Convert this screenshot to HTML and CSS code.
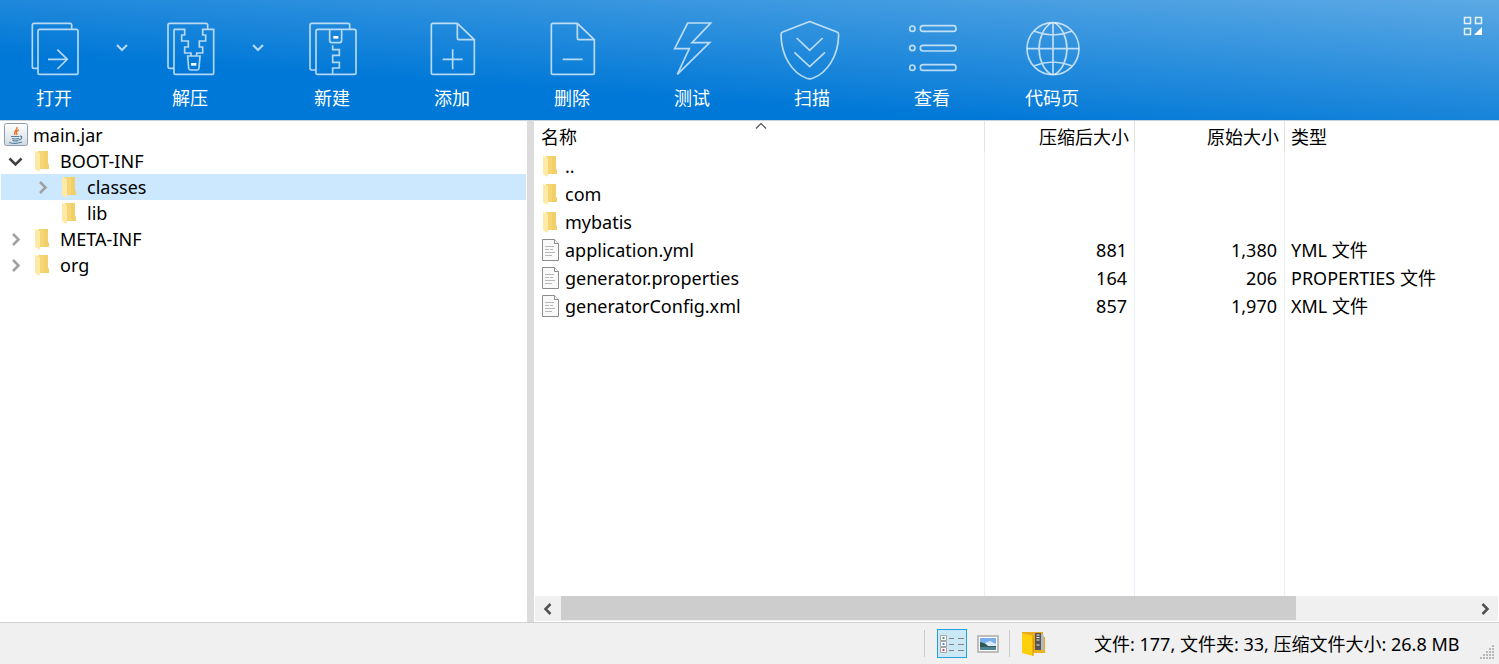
FILE: index.html
```html
<!DOCTYPE html>
<html lang="zh-CN">
<head>
<meta charset="utf-8">
<title>main.jar</title>
<link rel="stylesheet" href="styles.css">
</head>
<body>
<svg class="sprite" aria-hidden="true">
  <symbol id="folder" viewBox="0 0 16 22">
    <path d="M4 1h10v13l1 1v4H4z" fill="#f6d673"/>
    <path d="M10 1h4v13l1 1v4h-5z" fill="#f0cb62" opacity=".6"/>
    <path d="M1 1l5 2v17l-1 2-4-3z" fill="#fee9a6"/>
  </symbol>
  <symbol id="file" viewBox="0 0 18 22">
    <path d="M1.500 .5h12l4 4v17h-16z" fill="#fafafa" stroke="#8c8c8c"/>
    <path d="M13.500 .5v4h4" fill="#fff" stroke="#8c8c8c"/>
    <path d="M4 7.500h9M4 10.500h4M9 10.500h3M4 13.500h10M4 16.500h7" stroke="#b9b9b9"/>
  </symbol>
  <symbol id="right" viewBox="0 0 16 16"><path d="M6 3l5.500 5.500L6 14" fill="none" stroke="#a0a0a0" stroke-width="2.500"/></symbol>
</svg>
<div class="app">
  <header class="toolbar">
    <div class="split">
      <button class="tool">
        <svg class="tool-icon" viewBox="72 60 180 180"><path d="M114 205h-12q-5 0-5-5V75q0-5 5-5h108q5 0 5 5v12M119 88h110q5 0 5 5v125q0 5-5 5H119q-5 0-5-5V93q0-5 5-5zM144 178h59M172 149l30 29-30 29"/></svg>
        <span>打开</span>
      </button>
      <button class="drop" aria-label="打开选项"><svg viewBox="0 0 12 8"><path d="M1 1l5 5 5-5"/></svg></button>
    </div>
    <div class="split">
      <button class="tool">
        <svg class="tool-icon" viewBox="480 60 180 180"><path d="M522 205h-12q-6 0-6-5V75q0-5 5-5h109q5 0 5 5v12M522 88h32v17h-9v18h20v18h-11v18h19v9M522 88v130q0 5 5 5h109q5 0 5-5V88h-33v17h9v18h-19v18h10v18h-18v9M563 168h37l-3 37q-1 5-6 5h-19q-5 0-6-5z"/><path class="solid" d="M573 189h16v8h-16z"/></svg>
        <span>解压</span>
      </button>
      <button class="drop" aria-label="解压选项"><svg viewBox="0 0 12 8"><path d="M1 1l5 5 5-5"/></svg></button>
    </div>
    <button class="tool">
      <svg class="tool-icon" viewBox="66 60 180 180"><path d="M108 210H96q-6 0-6-5V75q0-5 5-5h109q5 0 5 5v12M113 88h110q5 0 5 5v125q0 5-5 5H113q-5 0-5-5V93q0-5 5-5zM149 88v32q0 8 6 8h24q6 0 6-8V88M158 136v13h20v17h-20v21h20v17h-20v18"/><path class="solid" d="M160 108h15v8h-15z"/></svg>
      <span>新建</span>
    </button>
    <button class="tool">
      <svg class="tool-icon" viewBox="426 60 180 180"><path d="M532 70h-73q-5 0-5 5v143q0 5 5 5h119q5 0 5-5V119zM532 70v44q0 5 5 5h46M488 178h60M518 148v60"/></svg>
      <span>添加</span>
    </button>
    <button class="tool">
      <svg class="tool-icon" viewBox="786 60 180 180"><path d="M892 70h-73q-5 0-5 5v143q0 5 5 5h119q5 0 5-5V119zM892 70v44q0 5 5 5h46M848 178h60"/></svg>
      <span>删除</span>
    </button>
    <button class="tool">
      <svg class="tool-icon" viewBox="126 60 180 180"><path d="M203 69h69l-56 59h53l-97 95 36-77h-44z"/></svg>
      <span>测试</span>
    </button>
    <button class="tool">
      <svg class="tool-icon" viewBox="486 60 180 180"><path d="M565 66q4-2 8 0l78 30q5 2 5 8c-1 65-35 115-78 131q-9 3-18 0c-43-16-76-66-77-131q0-6 5-8zM530 114l39 37 39-37M523 157l46 43 46-43"/></svg>
      <span>扫描</span>
    </button>
    <button class="tool">
      <svg class="tool-icon" viewBox="66 60 180 180"><circle cx="97" cy="86" r="8"/><circle cx="97" cy="144" r="8"/><circle cx="97" cy="203" r="8"/><rect x="121" y="77" width="107" height="17" rx="8"/><rect x="121" y="136" width="107" height="17" rx="8"/><rect x="121" y="194" width="107" height="17" rx="8"/></svg>
      <span>查看</span>
    </button>
    <button class="tool">
      <svg class="tool-icon" viewBox="426 60 180 180"><circle cx="519" cy="146" r="78"/><path d="M441 146h156M519 68v156M514 68c-49 32-49 124 0 156M524 68c49 32 49 124 0 156M463 94q56 22 112 0M463 197q56-22 112 0"/></svg>
      <span>代码页</span>
    </button>
    <button class="layout" aria-label="布局"><svg viewBox="0 0 20 20"><path d="M1.500 1.500h6v6h-6zM12.500 1.500h6v6h-6zM1.500 12.500h6v6h-6z" fill="none" stroke="#e5f1fb" stroke-width="1.500"/><path d="M19 11v8h-8z" fill="#fff"/></svg></button>
  </header>

  <main class="panes">
    <nav class="tree" aria-label="文件夹">
      <div class="node root">
        <svg class="jar" viewBox="0 0 24 24"><defs><linearGradient id="jg" x2="0" y2="1"><stop stop-color="#fff"/><stop offset="1" stop-color="#d3dce2"/></linearGradient></defs><rect x=".5" y=".5" width="23" height="22" rx="2" fill="url(#jg)" stroke="#8c9cab"/><path d="M13 4c1 3-4 4-2 8M15 7c-3 1-3 2-2 5" fill="none" stroke="#e87d35" stroke-width="1.500"/><path d="M7 13.500h8.500M8 15.500q3 1 7 0M8.500 17.500q3 1 6 0M5 19.500q7 2 13-.5M16 13q3 0 1 3l-2 1" fill="none" stroke="#5382a1" stroke-width="1.200"/></svg>
        <span>main.jar</span>
      </div>
      <div class="node"><button class="twist" aria-label="折叠 BOOT-INF"><svg viewBox="0 0 16 16"><path d="M2.500 5.500l6 6 6-6" fill="none" stroke="#404040" stroke-width="2.500"/></svg></button><svg class="folder"><use href="#folder"/></svg><span>BOOT-INF</span></div>
      <div class="node child selected"><button class="twist" aria-label="展开 classes"><svg><use href="#right"/></svg></button><svg class="folder"><use href="#folder"/></svg><span>classes</span></div>
      <div class="node child"><span class="twist"></span><svg class="folder"><use href="#folder"/></svg><span>lib</span></div>
      <div class="node"><button class="twist" aria-label="展开 META-INF"><svg><use href="#right"/></svg></button><svg class="folder"><use href="#folder"/></svg><span>META-INF</span></div>
      <div class="node"><button class="twist" aria-label="展开 org"><svg><use href="#right"/></svg></button><svg class="folder"><use href="#folder"/></svg><span>org</span></div>
    </nav>
    <div class="splitter"></div>
    <section class="list">
      <div class="table-wrap">
        <table class="files">
          <colgroup><col class="c-name"><col class="c-size"><col class="c-size"><col></colgroup>
          <thead>
            <tr><th>名称<svg class="sort" viewBox="0 0 12 8"><path d="M1 6.500l5-5 5 5" fill="none" stroke="#505050" stroke-width="1.200"/></svg></th><th class="num">压缩后大小</th><th class="num">原始大小</th><th>类型</th></tr>
          </thead>
          <tbody>
            <tr><td><div class="name"><svg class="icon"><use href="#folder"/></svg>..</div></td><td></td><td></td><td></td></tr>
            <tr><td><div class="name"><svg class="icon"><use href="#folder"/></svg>com</div></td><td></td><td></td><td></td></tr>
            <tr><td><div class="name"><svg class="icon"><use href="#folder"/></svg>mybatis</div></td><td></td><td></td><td></td></tr>
            <tr><td><div class="name"><svg class="icon doc"><use href="#file"/></svg>application.yml</div></td><td class="num">881</td><td class="num">1,380</td><td>YML 文件</td></tr>
            <tr><td><div class="name"><svg class="icon doc"><use href="#file"/></svg>generator.properties</div></td><td class="num">164</td><td class="num">206</td><td>PROPERTIES 文件</td></tr>
            <tr><td><div class="name"><svg class="icon doc"><use href="#file"/></svg>generatorConfig.xml</div></td><td class="num">857</td><td class="num">1,970</td><td>XML 文件</td></tr>
            <tr class="rest"><td></td><td></td><td></td><td></td></tr>
          </tbody>
        </table>
      </div>
      <div class="scrollbar">
        <button aria-label="向左滚动"><svg viewBox="0 0 12 12"><path d="M8.500 1l-5 5 5 5"/></svg></button>
        <div class="track"><div class="thumb"></div></div>
        <button aria-label="向右滚动"><svg viewBox="0 0 12 12"><path d="M3.500 1l5 5-5 5"/></svg></button>
      </div>
    </section>
  </main>

  <footer class="status">
    <div class="sep"></div>
    <button class="view active" aria-label="详细信息"><svg viewBox="0 0 26 24"><g fill="#fff" stroke="#a5a5a5"><path d="M1.500 3.500h6v5h-6zM1.500 9.500h6v5h-6zM1.500 15.500h6v5h-6z"/></g><path d="M10 6.500h5M19 6.500h6M10 12.500h5M19 12.500h6M10 18.500h5M19 18.500h6" stroke="#858585"/><path d="M3.500 5h2v2h-2z" fill="#4a9b78"/><path d="M3.500 11h2v2h-2z" fill="#4b8ee8"/><path d="M3.500 17h2v2h-2z" fill="#db3f3f"/></svg></button>
    <button class="view" aria-label="缩略图"><svg class="picture" viewBox="0 0 22 18"><rect x="1" y="1" width="20" height="16" fill="#fff" stroke="#a9a9a9" stroke-width="1.500"/><path d="M3 3h16v12H3z" fill="#79aef0"/><path d="M8 8l5-2 6 3v3H8z" fill="#d7ebfa"/><path d="M3 7q6 1 8 4h8v1H3z" fill="#315b50"/><path d="M3 12h16v3H3z" fill="#4f8396"/></svg></button>
    <div class="sep"></div>
    <svg class="archive" viewBox="0 0 26 28"><path d="M1 2h21v5h2v16H1z" fill="#e9a91b"/><path d="M15 4h6l2 2v17h-8z" fill="#b8b8b8"/><path d="M14 3h6v17h-6z" fill="#555"/><path d="M15.500 5h3M15.500 7.500h3M15.500 10h3M15.500 15h3" stroke="#eee" stroke-width="1.200"/><path d="M13 20h11v3H13z" fill="#efb21f"/><path d="M1 3l11 3v20L1 23z" fill="#ffcf09"/><path d="M12 6v20" stroke="#d99400"/></svg>
    <span class="summary">文件: 177, 文件夹: 33, 压缩文件大小: 26.8 MB</span>
    <svg class="grip" viewBox="0 0 16 16"><g fill="#b8b8b8"><path d="M13 1h2v2h-2zM10 4h2v2h-2zM13 4h2v2h-2zM7 7h2v2H7zM10 7h2v2h-2zM13 7h2v2h-2zM4 10h2v2H4zM7 10h2v2H7zM10 10h2v2h-2zM13 10h2v2h-2zM1 13h2v2H1zM4 13h2v2H4zM7 13h2v2H7zM10 13h2v2h-2zM13 13h2v2h-2z"/></g></svg>
  </footer>
</div>
</body>
</html>
```

FILE: styles.css
```css
* { box-sizing: border-box; }
body {
  margin: 0;
  font-family: "Noto Sans", "Noto Sans CJK SC", sans-serif;
  font-size: 18px;
  line-height: 26px;
  color: #000;
  background: #fff;
}
button {
  margin: 0;
  padding: 0;
  border: 0;
  background: none;
  font: inherit;
  color: inherit;
}
svg { display: block; flex: none; }
.sprite { position: absolute; width: 0; height: 0; }
.app { display: flex; flex-direction: column; height: 100vh; }

.toolbar {
  display: flex;
  flex: none;
  border-bottom: 1px solid #c8d0d8;
  background: linear-gradient(4deg, #0078d7 30%, #5ca9e4 100%);
  color: #fff;
}
.split { display: flex; }
.tool {
  display: flex;
  flex-direction: column;
  align-items: center;
  gap: 5px;
  width: 120px;
  padding: 20px 0 9px;
}
.split .tool { width: 108px; }
.tool-icon {
  width: 60px;
  height: 60px;
  overflow: visible;
  fill: none;
  stroke: #fff;
  stroke-opacity: .7;
  stroke-width: 5;
}
.tool-icon .solid { fill: #fff; stroke: none; }
.drop { display: flex; justify-content: center; width: 28px; padding-top: 44px; }
.drop svg { width: 12px; height: 8px; fill: none; stroke: #b8dbf5; stroke-width: 2; }
.layout { align-self: flex-start; margin: 16px 16px 0 auto; }
.layout svg { width: 20px; height: 20px; }

.panes {
  display: grid;
  grid-template-columns: minmax(0, 527fr) 7px minmax(0, 965fr);
  flex: 1;
  min-height: 0;
}
.tree { padding: 1px 1px 0; overflow: hidden; }
.node { display: flex; align-items: center; height: 26px; padding-left: 6px; }
.node.root { gap: 5px; padding-left: 3px; }
.node.child { padding-left: 33px; }
.node.selected { background: #cce8ff; }
.jar { width: 24px; height: 24px; }
.twist { display: flex; justify-content: center; width: 16px; margin-right: 11px; }
.twist svg { width: 16px; height: 16px; }
.folder { width: 16px; height: 22px; margin-right: 10px; }
.splitter { background: #dcdcdc; }

.list { display: flex; flex-direction: column; min-width: 0; padding: 0 1px 1px; }
.table-wrap { flex: 1; min-height: 0; overflow: hidden; }
.files { width: 100%; height: 100%; table-layout: fixed; border-collapse: separate; border-spacing: 0; }
.c-name { width: 450px; }
.c-size { width: 150px; }
th, td {
  height: 28px;
  padding: 0 6px;
  border-right: 1px solid #e8f0fc;
  text-align: left;
  font-weight: 400;
  white-space: nowrap;
}
th { position: relative; height: 31px; border-right-color: #e2e2e2; }
th:last-child, td:last-child { border-right: 0; }
th.num { padding-right: 5px; text-align: right; }
td.num { padding-right: 7px; text-align: right; }
.sort { position: absolute; top: 1px; left: 50%; width: 12px; height: 8px; margin-left: -5px; }
.name { display: flex; align-items: center; gap: 6px; }
.icon { width: 18px; height: 22px; }
.icon:not(.doc) { width: 16px; margin: 0 1px; }
.rest td { height: auto; }

.scrollbar { display: flex; flex: none; height: 25px; background: #f0f0f0; }
.scrollbar button { display: flex; align-items: center; justify-content: center; width: 26px; }
.scrollbar svg { width: 12px; height: 12px; fill: none; stroke: #505050; stroke-width: 2.5; }
.track { flex: 1; padding-bottom: 1px; }
.thumb { width: 80.7%; height: 100%; background: #cdcdcd; }

.status {
  display: flex;
  flex: none;
  align-items: center;
  justify-content: flex-end;
  height: 42px;
  border-top: 1px solid #d0d0d0;
  background: #f0f0f0;
}
.sep { width: 1px; height: 27px; background: #cacaca; }
.view { display: flex; align-items: center; justify-content: center; width: 30px; height: 29px; margin-right: 6px; }
.view.active { margin-left: 12px; border: 1px solid #26a0da; background: #cbe8f6; }
.view svg { width: 26px; height: 24px; }
.view .picture { width: 22px; height: 18px; }
.archive { width: 26px; height: 28px; margin: 0 47px 0 11px; }
.summary { min-width: 372px; white-space: nowrap; }
.grip { align-self: flex-end; width: 16px; height: 16px; margin: 0 4px 4px 13px; }
```
